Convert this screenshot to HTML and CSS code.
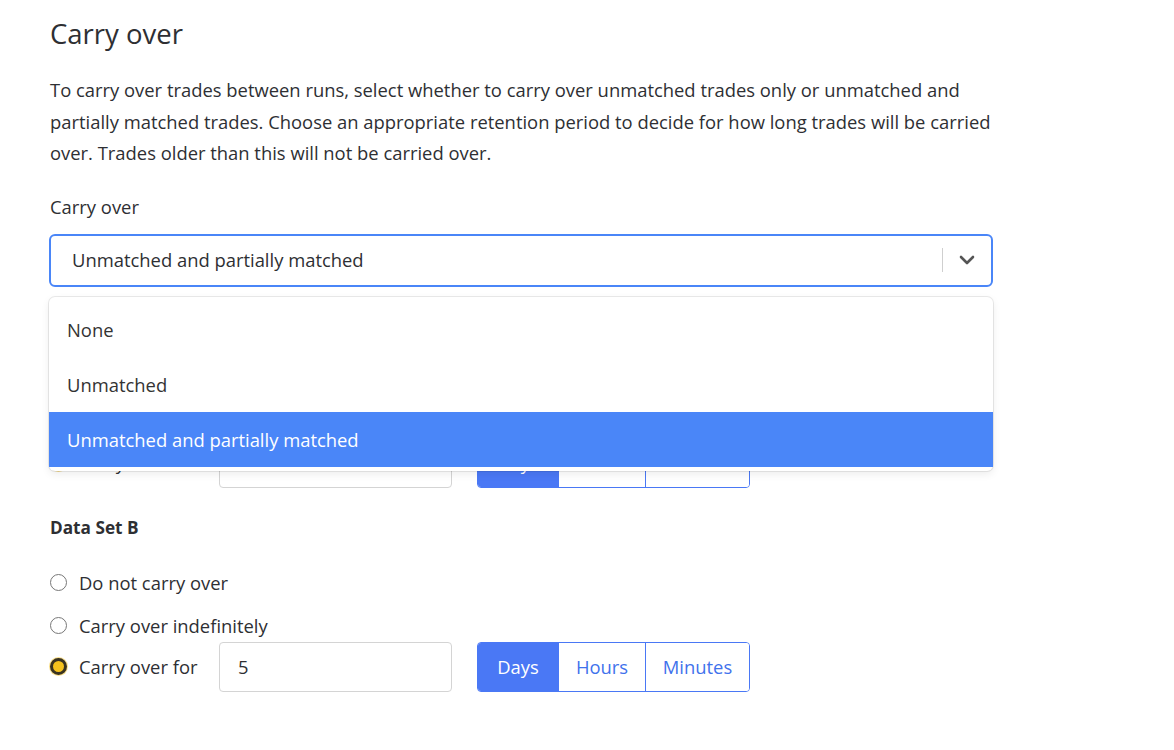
FILE: index.html
```html
<!DOCTYPE html>
<html>
<head>
<meta charset="utf-8">
<link rel="stylesheet" href="styles.css">
</head>
<body>
<div class="page">
  <h1 class="title">Carry over</h1>
  <p class="intro">To carry over trades between runs, select whether to carry over unmatched trades only or unmatched and partially matched trades. Choose an appropriate retention period to decide for how long trades will be carried over. Trades older than this will not be carried over.</p>
  <div class="field-label">Carry over</div>
  <div class="select-wrap">
    <div class="select">
      <span class="select-value">Unmatched and partially matched</span>
      <span class="select-sep"></span>
      <span class="select-chev">
        <svg width="16" height="10" viewBox="0 0 16 10"><path d="M2 2 L8 8 L14 2" fill="none" stroke="#555" stroke-width="2.6" stroke-linecap="round" stroke-linejoin="round"/></svg>
      </span>
    </div>
    <div class="menu">
      <div class="option">None</div>
      <div class="option">Unmatched</div>
      <div class="option selected">Unmatched and partially matched</div>
    </div>
  </div>

  <div class="section">
    <div class="section-title">Data Set A</div>
    <div class="radio-row first"><span class="radio"></span><span class="radio-text">Do not carry over</span></div>
    <div class="radio-row"><span class="radio"></span><span class="radio-text">Carry over indefinitely</span></div>
    <div class="radio-row period">
      <span class="radio checked"></span><span class="radio-text">Carry over for</span>
      <div class="num-input">5</div>
      <div class="btn-group">
        <span class="btn active">Days</span><span class="btn">Hours</span><span class="btn">Minutes</span>
      </div>
    </div>
  </div>

  <div class="section">
    <div class="section-title">Data Set B</div>
    <div class="radio-row first"><span class="radio"></span><span class="radio-text">Do not carry over</span></div>
    <div class="radio-row"><span class="radio"></span><span class="radio-text">Carry over indefinitely</span></div>
    <div class="radio-row period">
      <span class="radio checked"></span><span class="radio-text">Carry over for</span>
      <div class="num-input">5</div>
      <div class="btn-group">
        <span class="btn active">Days</span><span class="btn">Hours</span><span class="btn">Minutes</span>
      </div>
    </div>
  </div>
</div>
</body>
</html>
```
FILE: styles.css
```css
html, body {
  margin: 0;
  padding: 0;
  background: #fff;
}
body {
  font-family: "Open Sans", "Noto Sans", sans-serif;
  color: #2e2f33;
}
.page {
  width: 944px;
  padding: 14px 0 40px 49px;
}
.title {
  margin: 0;
  font-size: 27.5px;
  line-height: 40px;
  font-weight: 400;
  padding-left: 1px;
}
.intro {
  margin: 20px 0 0;
  font-size: 18.4px;
  line-height: 31.5px;
  padding-left: 1px;
}
.field-label {
  margin-top: 26px;
  font-size: 18.4px;
  line-height: 24px;
  padding-left: 1px;
}
.select-wrap {
  position: relative;
  margin-top: 15px;
}
.select {
  height: 53px;
  box-sizing: border-box;
  border: 2px solid #4a86f8;
  border-radius: 6px;
  display: flex;
  align-items: center;
  padding-left: 21px;
}
.select-value {
  flex: 1;
  font-size: 18.4px;
  line-height: 24px;
  margin-top: -1px;
}
.select-sep {
  width: 1px;
  height: 24px;
  background: #cfcfcf;
}
.select-chev {
  width: 48px;
  display: flex;
  justify-content: center;
  align-items: center;
}
.menu {
  position: absolute;
  left: 0;
  right: 0;
  top: 63px;
  background: #fff;
  border-radius: 6px;
  box-shadow: 0 0 0 1px rgba(0,0,0,0.08), 0 3px 8px rgba(0,0,0,0.08);
  padding: 6px 0 4px;
  z-index: 5;
}
.option {
  height: 54.7px;
  display: flex;
  align-items: center;
  padding-left: 18px;
  font-size: 18.4px;
  color: #333;
}
.option.selected {
  background: #4a86f8;
  color: #fff;
}
.section {
  margin-top: 25px;
}
.section + .section {
  margin-top: 28px;
}
.section-title {
  font-size: 17.2px;
  font-weight: 700;
  line-height: 24px;
  padding-left: 1px;
}
.radio-row {
  display: flex;
  align-items: center;
  height: 24px;
  margin-top: 19px;
  font-size: 18.4px;
  white-space: nowrap;
}
.radio-row.first {
  margin-top: 31px;
}
.radio-row.period {
  height: 50px;
  margin-top: 4px;
}
.radio {
  flex: none;
  width: 17px;
  height: 17px;
  box-sizing: border-box;
  border: 1px solid #777;
  border-radius: 50%;
  margin-left: 1px;
  margin-right: 12px;
  background: #fff;
}
.radio.checked {
  border: 3px solid #3a3320;
  background: #f6c21c;
  box-shadow: 0 0 0 1px rgba(246, 194, 28, 0.5);
}
.period .radio-text {
  width: 140px;
}
.num-input {
  width: 233px;
  height: 50px;
  box-sizing: border-box;
  border: 1px solid #d4d4d4;
  border-radius: 4px;
  display: flex;
  align-items: center;
  padding-left: 18px;
  margin-right: 25px;
}
.btn-group {
  display: flex;
  height: 50px;
  box-sizing: border-box;
  border: 1px solid #4a78f5;
  border-radius: 4px;
  overflow: hidden;
}
.btn {
  box-sizing: border-box;
  display: flex;
  align-items: center;
  justify-content: center;
  color: #3f72ec;
  background: #fff;
}
.btn:nth-child(1) { width: 80px; }
.btn:nth-child(2) { width: 88px; border-left: 1px solid #4a78f5; border-right: 1px solid #4a78f5; }
.btn:nth-child(3) { width: 103px; }
.btn.active {
  background: #4a78f5;
  color: #fff;
}
```
